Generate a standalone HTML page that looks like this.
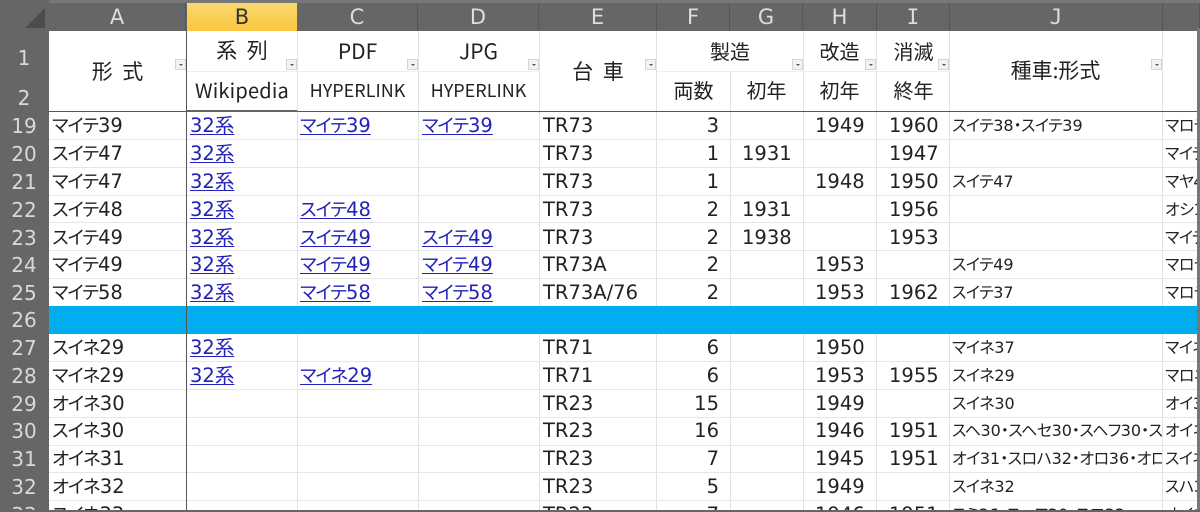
<!DOCTYPE html>
<html><head><meta charset="utf-8"><style>
html,body{margin:0;padding:0;background:#fff;overflow:hidden;height:512px}
#s{position:relative;width:1200px;height:512px;overflow:hidden;background:#fff;font-family:"DejaVu Sans","Noto Sans CJK JP",sans-serif;color:#222}
#s div{position:absolute}
.t{position:absolute;top:0;white-space:nowrap;font-size:19.5px;line-height:28px;font-family:"DejaVu Sans","Noto Sans CJK JP",sans-serif;font-weight:400;font-feature-settings:"palt"}
.t i{font-style:normal;font-size:18.4px;letter-spacing:-1px}
.r{height:28px;left:0;width:1200px}
.a{left:52px}.b{left:190px;color:#2222bb;text-decoration:underline;text-underline-offset:2px}.c{left:300px;color:#2222bb;text-decoration:underline;text-underline-offset:2px}.d{left:422px;color:#2222bb;text-decoration:underline;text-underline-offset:2px}
.e{left:543px}.f{right:481px}.g{left:742px}.h{left:815px}.i{left:889px}.j{left:952px;font-size:16px;width:210px;overflow:hidden}.k{left:1165px;font-size:16px;width:32px;overflow:hidden}
.j i,.k i{font-size:16px;letter-spacing:-.5px}
.n{left:0;width:48px;text-align:center;color:#d9d9d9;font-size:20px}
.ch{top:3px;height:28px;line-height:28px;text-align:center;color:#ddd;font-size:21px;font-family:"DejaVu Sans",sans-serif;background:#666;border-right:1px solid #555;box-sizing:border-box}
.hd{position:absolute;white-space:nowrap;text-align:center;font-family:"Noto Sans CJK JP",sans-serif;font-size:20px;line-height:28px;color:#222}
.fb{width:11px;height:11px;background:#f2f2f2;border:1px solid #d4d4d4;box-sizing:border-box}
.fb:after{content:"";position:absolute;left:3px;top:4px;border:2px solid transparent;border-top:2px solid #555}
.v{top:31px;width:1px;height:481px;background:#e2e2e2}
.l{left:49px;width:1148px;height:1px;background:#e6e6e6}
</style></head><body><div id="s">
<div style="left:0;top:0;width:1200px;height:31px;background:#666"></div>
<div style="left:0;top:0;width:1200px;height:3px;background:#777"></div>
<div style="left:0;top:0;width:49px;height:512px;background:#666"></div>
<svg style="position:absolute;left:0;top:0" width="49" height="31"><path d="M25 28 L45 8 V28 Z" fill="#4c4c4c"/></svg>

<div class="ch" style="left:49px;width:137px">A</div>
<div class="ch" style="left:187px;width:110px;color:#333;background:linear-gradient(#f9d970,#fcc63f);border:0">B</div>
<div class="ch" style="left:297px;width:121px">C</div>
<div class="ch" style="left:418px;width:121px">D</div>
<div class="ch" style="left:539px;width:118px">E</div>
<div class="ch" style="left:657px;width:73px">F</div>
<div class="ch" style="left:730px;width:73px">G</div>
<div class="ch" style="left:803px;width:74px">H</div>
<div class="ch" style="left:877px;width:73px;font-family:'DejaVu Sans Mono','DejaVu Sans',sans-serif">I</div>
<div class="ch" style="left:950px;width:213px;font-family:'DejaVu Sans Mono','DejaVu Sans',sans-serif">J</div>
<div class="ch" style="left:1163px;width:37px"></div>

<div class="v" style="left:297px"></div><div class="v" style="left:418px"></div><div class="v" style="left:539px"></div><div class="v" style="left:656px"></div><div class="v" style="left:730px;top:71px;height:441px"></div><div class="v" style="left:803px"></div><div class="v" style="left:876px"></div><div class="v" style="left:949px"></div><div class="v" style="left:1162px"></div>

<div class="l" style="top:139px"></div><div class="l" style="top:167px"></div><div class="l" style="top:195px"></div><div class="l" style="top:222px"></div><div class="l" style="top:250px"></div><div class="l" style="top:278px"></div><div class="l" style="top:361px"></div><div class="l" style="top:389px"></div><div class="l" style="top:417px"></div><div class="l" style="top:445px"></div><div class="l" style="top:472px"></div><div class="l" style="top:500px"></div>
<div class="l" style="top:71px;left:187px;width:352px;background:#eee"></div>
<div class="l" style="top:71px;left:657px;width:292px;background:#eee"></div>

<div style="left:49px;top:306px;width:1151px;height:28px;background:#00adef"></div>
<div style="left:49px;top:111px;width:1148px;height:1px;background:#555"></div>
<div style="left:186px;top:31px;width:1px;height:481px;background:#555"></div>
<div style="left:187px;top:110px;width:110px;height:2px;background:#666"></div>
<div style="left:1197px;top:28px;width:3px;height:484px;background:#777"></div>

<span class="hd" style="left:49px;width:137px;top:57px;font-size:21px">形&nbsp;&nbsp;式</span>
<span class="hd" style="left:187px;width:110px;top:36px;font-size:21px">系&nbsp;&nbsp;列</span>
<span class="hd" style="left:187px;width:110px;top:76px;letter-spacing:.2px">Wikipedia</span>
<span class="hd" style="left:297px;width:121px;top:37px;font-size:21px">PDF</span>
<span class="hd" style="left:297px;width:121px;top:76px;font-size:18px">HYPERLINK</span>
<span class="hd" style="left:418px;width:121px;top:37px;font-size:21px">JPG</span>
<span class="hd" style="left:418px;width:121px;top:76px;font-size:18px">HYPERLINK</span>
<span class="hd" style="left:539px;width:118px;top:57px;font-size:21px">台&nbsp;&nbsp;車</span>
<span class="hd" style="left:657px;width:146px;top:37px">製造</span>
<span class="hd" style="left:657px;width:73px;top:76px">両数</span>
<span class="hd" style="left:730px;width:73px;top:76px">初年</span>
<span class="hd" style="left:803px;width:73px;top:37px">改造</span>
<span class="hd" style="left:803px;width:73px;top:76px">初年</span>
<span class="hd" style="left:877px;width:73px;top:37px">消滅</span>
<span class="hd" style="left:877px;width:73px;top:76px">終年</span>
<span class="hd" style="left:949px;width:213px;top:56px;font-size:21px">種車:形式</span>

<div class="fb" style="left:175px;top:59px"></div><div class="fb" style="left:286px;top:59px"></div><div class="fb" style="left:407px;top:59px"></div><div class="fb" style="left:528px;top:59px"></div><div class="fb" style="left:645px;top:59px"></div><div class="fb" style="left:792px;top:59px"></div><div class="fb" style="left:865px;top:59px"></div><div class="fb" style="left:938px;top:59px"></div><div class="fb" style="left:1151px;top:59px"></div>

<span class="t n" style="top:44px">1</span><span class="t n" style="top:84px">2</span>

<div class="r" style="top:112px"><span class="t n">19</span><span class="t a"><i>マイテ</i>39</span><span class="t b">32系</span><span class="t c"><i>マイテ</i>39</span><span class="t d"><i>マイテ</i>39</span><span class="t e">TR73</span><span class="t f">3</span><span class="t h">1949</span><span class="t i">1960</span><span class="t j"><i>スイテ</i>38<i>・スイテ</i>39</span><span class="t k"><i>マロテ</i></span></div>
<div class="r" style="top:140px"><span class="t n">20</span><span class="t a"><i>スイテ</i>47</span><span class="t b">32系</span><span class="t e">TR73</span><span class="t f">1</span><span class="t g">1931</span><span class="t i">1947</span><span class="t k"><i>マイテ</i></span></div>
<div class="r" style="top:168px"><span class="t n">21</span><span class="t a"><i>マイテ</i>47</span><span class="t b">32系</span><span class="t e">TR73</span><span class="t f">1</span><span class="t h">1948</span><span class="t i">1950</span><span class="t j"><i>スイテ</i>47</span><span class="t k"><i>マヤ</i>4</span></div>
<div class="r" style="top:196px"><span class="t n">22</span><span class="t a"><i>スイテ</i>48</span><span class="t b">32系</span><span class="t c"><i>スイテ</i>48</span><span class="t e">TR73</span><span class="t f">2</span><span class="t g">1931</span><span class="t i">1956</span><span class="t k"><i>オシ</i>1</span></div>
<div class="r" style="top:224px"><span class="t n">23</span><span class="t a"><i>スイテ</i>49</span><span class="t b">32系</span><span class="t c"><i>スイテ</i>49</span><span class="t d"><i>スイテ</i>49</span><span class="t e">TR73</span><span class="t f">2</span><span class="t g">1938</span><span class="t i">1953</span><span class="t k"><i>マイテ</i></span></div>
<div class="r" style="top:251px"><span class="t n">24</span><span class="t a"><i>マイテ</i>49</span><span class="t b">32系</span><span class="t c"><i>マイテ</i>49</span><span class="t d"><i>マイテ</i>49</span><span class="t e">TR73A</span><span class="t f">2</span><span class="t h">1953</span><span class="t j"><i>スイテ</i>49</span><span class="t k"><i>マロテ</i></span></div>
<div class="r" style="top:279px"><span class="t n">25</span><span class="t a"><i>マイテ</i>58</span><span class="t b">32系</span><span class="t c"><i>マイテ</i>58</span><span class="t d"><i>マイテ</i>58</span><span class="t e">TR73A/76</span><span class="t f">2</span><span class="t h">1953</span><span class="t i">1962</span><span class="t j"><i>スイテ</i>37</span><span class="t k"><i>マロテ</i></span></div>
<div class="r" style="top:306px"><span class="t n">26</span></div>
<div class="r" style="top:334px"><span class="t n">27</span><span class="t a"><i>スイネ</i>29</span><span class="t b">32系</span><span class="t e">TR71</span><span class="t f">6</span><span class="t h">1950</span><span class="t j"><i>マイネ</i>37</span><span class="t k"><i>マイネ</i></span></div>
<div class="r" style="top:362px"><span class="t n">28</span><span class="t a"><i>マイネ</i>29</span><span class="t b">32系</span><span class="t c"><i>マイネ</i>29</span><span class="t e">TR71</span><span class="t f">6</span><span class="t h">1953</span><span class="t i">1955</span><span class="t j"><i>スイネ</i>29</span><span class="t k"><i>マロネ</i></span></div>
<div class="r" style="top:390px"><span class="t n">29</span><span class="t a"><i>オイネ</i>30</span><span class="t e">TR23</span><span class="t f">15</span><span class="t h">1949</span><span class="t j"><i>スイネ</i>30</span><span class="t k"><i>オイ</i>3</span></div>
<div class="r" style="top:417px"><span class="t n">30</span><span class="t a"><i>スイネ</i>30</span><span class="t e">TR23</span><span class="t f">16</span><span class="t h">1946</span><span class="t i">1951</span><span class="t j"><i>スヘ</i>30<i>・スヘセ</i>30<i>・スヘフ</i>30<i>・ス</i></span><span class="t k"><i>オイネ</i></span></div>
<div class="r" style="top:445px"><span class="t n">31</span><span class="t a"><i>オイネ</i>31</span><span class="t e">TR23</span><span class="t f">7</span><span class="t h">1945</span><span class="t i">1951</span><span class="t j"><i>オイ</i>31<i>・スロハ</i>32<i>・オロ</i>36<i>・オロ</i></span><span class="t k"><i>スイネ</i></span></div>
<div class="r" style="top:473px"><span class="t n">32</span><span class="t a"><i>オイネ</i>32</span><span class="t e">TR23</span><span class="t f">5</span><span class="t h">1949</span><span class="t j"><i>スイネ</i>32</span><span class="t k"><i>スハ</i>3</span></div>
<div class="r" style="top:501px;height:9px;overflow:hidden"><span class="t n">33</span><span class="t a"><i>スイネ</i>33</span><span class="t e">TR23</span><span class="t f">7</span><span class="t h">1946</span><span class="t i">1951</span><span class="t j"><i>スミ</i>36<i>・スヘフ</i>30<i>・スロ</i>33</span><span class="t k"><i>オイネ</i></span></div>
<div style="left:0;top:510px;width:1200px;height:2px;background:#666"></div>
</div></body></html>
